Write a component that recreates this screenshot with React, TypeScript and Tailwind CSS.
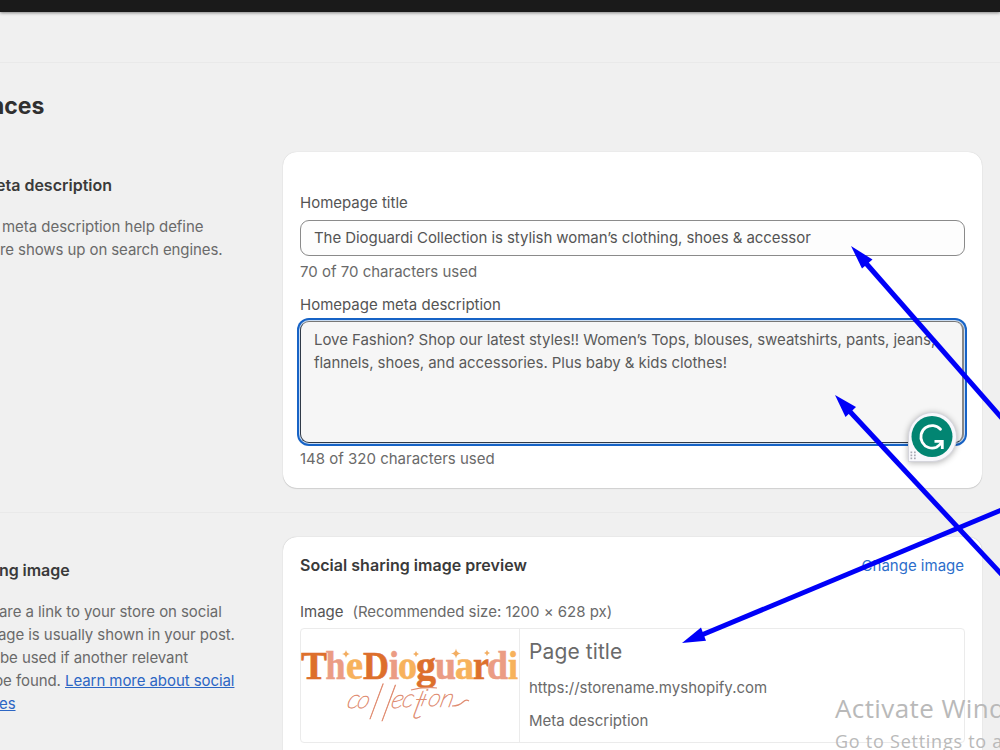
import React from 'react';

const logoLetters = [
  { char: 'T', x: 301, width: 26, color: '#dd6f2c' },
  { char: 'h', x: 325.5, width: 20, color: '#eb9c84' },
  { char: 'e', x: 346, width: 17, color: '#f7b25c' },
  { char: 'D', x: 363, width: 26, color: '#dd6f2c' },
  { char: 'i', x: 389, width: 10, color: '#eb9c84' },
  { char: 'o', x: 398, width: 19, color: '#f7b25c' },
  { char: 'g', x: 416, width: 20, color: '#dd6f2c' },
  { char: 'u', x: 435, width: 21, color: '#eb9c84' },
  { char: 'a', x: 455, width: 19, color: '#f7b25c' },
  { char: 'r', x: 473, width: 16, color: '#dd6f2c' },
  { char: 'd', x: 487, width: 21, color: '#eb9c84' },
  { char: 'i', x: 508, width: 10, color: '#f7b25c' },
];

const scriptLetters = [
  { char: 'c', x: 346, y: 708, size: 26 },
  { char: 'o', x: 356, y: 708, size: 24 },
  { char: 'l', x: 367, y: 719, size: 49 },
  { char: 'l', x: 379, y: 721, size: 50 },
  { char: 'e', x: 390, y: 708, size: 26 },
  { char: 'c', x: 401, y: 707, size: 25 },
  { char: 't', x: 410, y: 718, size: 40 },
  { char: 'i', x: 420, y: 706, size: 24 },
  { char: 'o', x: 427, y: 706, size: 24 },
  { char: 'n', x: 439, y: 707, size: 26 },
];

const sparkles = [
  { x: 346, y: 654, r: 4 },
  { x: 416, y: 654, r: 3 },
  { x: 456, y: 653.5, r: 5 },
  { x: 487, y: 653, r: 3 },
];

function Logo() {
  return (
    <svg viewBox="301 629 218 113" className="w-[218px] h-[113px] shrink-0">
      {logoLetters.map((l, i) => (
        <text key={i} x={l.x} y="679" textLength={l.width} lengthAdjust="spacingAndGlyphs" fill={l.color} stroke={l.color} strokeWidth="0.6" className="font-['Liberation_Serif',serif] font-bold text-[39px]">{l.char}</text>
      ))}
      {sparkles.map((s, i) => (
        <path key={i} d={`M${s.x} ${s.y - s.r}q.6 ${s.r - 0.6} ${s.r} ${s.r}q${0.6 - s.r} .6 ${-s.r} ${s.r}q-.6 ${0.6 - s.r} ${-s.r} ${-s.r}q${s.r - 0.6} -.6 ${s.r} ${-s.r}`} fill="#f3ae62" />
      ))}
      {scriptLetters.map((l, i) => (
        <text key={i} transform={`translate(${l.x} ${l.y}) skewX(-14)`} fontSize={l.size} fill="#e08d72" stroke="#e08d72" strokeWidth="0.7" className="font-['Lato',sans-serif] font-thin italic">{l.char}</text>
      ))}
      <path d="M411 690Q424 686 437 688M452 706Q459 706 463 702Q466 699 469 701" fill="none" stroke="#e08d72" strokeWidth="1.2" />
    </svg>
  );
}

function GrammarlyBadge() {
  return (
    <div className="absolute left-[607px] top-[90px] w-[49px] h-[50px] rounded-full rounded-bl-[5px] bg-[#f8f8fc] border border-[#d5d5dc] shadow-[0_1px_6px_rgba(0,0,0,0.3)]">
      <svg viewBox="908 412 49 50" className="absolute -left-px -top-px w-[49px] h-[50px]">
        <circle cx="932" cy="436.5" r="20.5" fill="#028572" />
        <path d="M940.5 429.2A11.3 11.3 0 1 0 936.5 447.3Q939 446 941.5 442.5" fill="none" stroke="#fff" strokeWidth="2.8" strokeLinecap="round" />
        <path d="M934.5 441.3H942.3V449" fill="none" stroke="#fff" strokeWidth="2.8" />
        <g fill="#a8a9b3">
          {[452, 455, 458].map(y => (
            <React.Fragment key={y}>
              <rect x="910.5" y={y - 0.5} width="1.7" height="1.7" />
              <rect x="914" y={y - 0.5} width="1.7" height="1.7" />
            </React.Fragment>
          ))}
        </g>
      </svg>
    </div>
  );
}

function Arrows() {
  return (
    <svg viewBox="0 0 1000 750" className="absolute inset-0 w-[1000px] h-[750px] pointer-events-none">
      <g stroke="#0000f8" strokeWidth="5">
        <path d="M864 261L1004 420.5" />
        <path d="M848 409.5L1004 577" />
        <path d="M698 636.5L1004 509" />
      </g>
      <g fill="#0000f8">
        <path d="M851 246L872.5 259.5L862 268.5Z" />
        <path d="M835 395L856 407L845.5 417Z" />
        <path d="M682 643L701 627.5L706 640.7Z" />
      </g>
    </svg>
  );
}

export default function App() {
  return (
    <div className="relative w-[1000px] h-[750px] overflow-hidden bg-[#f0f0f0] font-['Inter',sans-serif] text-[15px] leading-[23px] text-[#6a6a6a] whitespace-nowrap">
      <header className="h-3 bg-[#1a1a1a] shadow-[0_1px_3px_rgba(0,0,0,0.45)]" />
      <div className="h-[51px] border-b border-[#e9e9e9]" />

      <div className="h-[89px] pt-[28px] -ml-[10px]">
        <h1 className="text-[23px] leading-[30px] font-bold text-[#303030]">nces</h1>
      </div>

      <section className="flex h-[361px] border-b border-[#e9e9e9]">
        <div className="w-[283px] shrink-0 pt-[22px] tracking-[-0.09px]">
          <h2 className="-ml-[4px] text-base leading-[23px] tracking-normal font-semibold text-[#3a3a3a]">eta description</h2>
          <p className="mt-[18px] ml-[2px] tracking-[-0.04px]">meta description help define</p>
          <p>re shows up on search engines.</p>
        </div>
        <div className="w-[699px] h-[336px] rounded-[14px] bg-white px-[17px] pt-[39px] shadow-[0_1px_1px_rgba(0,0,0,0.12),0_0_1px_rgba(0,0,0,0.2)]">
          <label className="block text-[#545454]">Homepage title</label>
          <div className="mt-[6px] h-9 w-[665px] rounded-[9px] border border-[#8a8a8a] bg-[#fdfdfd] px-[13px] leading-[34px] tracking-[-0.065px] text-[#545454]">The Dioguardi Collection is stylish woman’s clothing, shoes &amp; accessor</div>
          <p className="mt-1">70 of 70 characters used</p>
          <label className="block mt-[10px] text-[#545454]">Homepage meta description</label>
          <div className="relative mt-[5px] h-[122px] w-[664px] rounded-[9px] border border-[#303a48] border-t-[#777] border-r-2 border-r-[#888] bg-[#f6f6f6] px-[13px] pt-[6px] tracking-[-0.055px] text-[#5a5a5a] shadow-[0_0_0_1px_#c9dcf2,0_0_0_3px_#1763c6]">
            <p>Love Fashion? Shop our latest styles!! Women’s Tops, blouses, sweatshirts, pants, jeans,</p>
            <p>flannels, shoes, and accessories. Plus baby &amp; kids clothes!</p>
            <GrammarlyBadge />
          </div>
          <p className="mt-1">148 of 320 characters used</p>
        </div>
      </section>

      <section className="flex pt-6">
        <div className="w-[283px] shrink-0 pt-[22px] tracking-[-0.07px]">
          <h2 className="-ml-[1px] text-base leading-[23px] font-semibold text-[#3a3a3a]">ng image</h2>
          <p className="mt-[18px] -ml-[1px]">are a link to your store on social</p>
          <p className="-ml-[2px]">age is usually shown in your post.</p>
          <p>be used if another relevant</p>
          <p className="-ml-[6px]">be found. <a className="text-[#2c66c4] underline">Learn more about social</a></p>
          <p className="-ml-[1px]"><a className="text-[#2c66c4] underline">es</a></p>
        </div>
        <div className="w-[699px] h-[230px] rounded-t-[14px] bg-white px-[17px] pt-[17px] shadow-[0_0_1px_rgba(0,0,0,0.3)]">
          <div className="flex justify-between w-[664px]">
            <h2 className="text-base leading-[23px] tracking-[0.03px] font-semibold text-[#3a3a3a]">Social sharing image preview</h2>
            <a className="text-[#2c6ecb]">Change image</a>
          </div>
          <div className="flex gap-[9px] mt-[23px] tracking-[-0.02px]">
            <span className="text-[#545454]">Image</span>
            <span>(Recommended size: 1200 × 628 px)</span>
          </div>
          <div className="flex mt-[5px] w-[665px] h-[115px] rounded-[4px] border border-[#ebebeb]">
            <Logo />
            <div className="border-l border-[#ebebeb] pl-[9px] pt-[9px]">
              <h3 className="text-[21px] leading-[28px] tracking-[0.1px]">Page title</h3>
              <p className="mt-[10px]">https://storename.myshopify.com</p>
              <p className="mt-[10px]">Meta description</p>
            </div>
          </div>
        </div>
      </section>

      <Arrows />
      <div className="absolute left-[835px] top-[690px] font-['Open_Sans',sans-serif] text-[#b9b9b9]">
        <p className="text-[26px] leading-[36px] tracking-[0.4px]">Activate Windows</p>
        <p className="text-[18px] leading-[31px] tracking-[0.75px]">Go to Settings to activate</p>
      </div>
    </div>
  );
}
